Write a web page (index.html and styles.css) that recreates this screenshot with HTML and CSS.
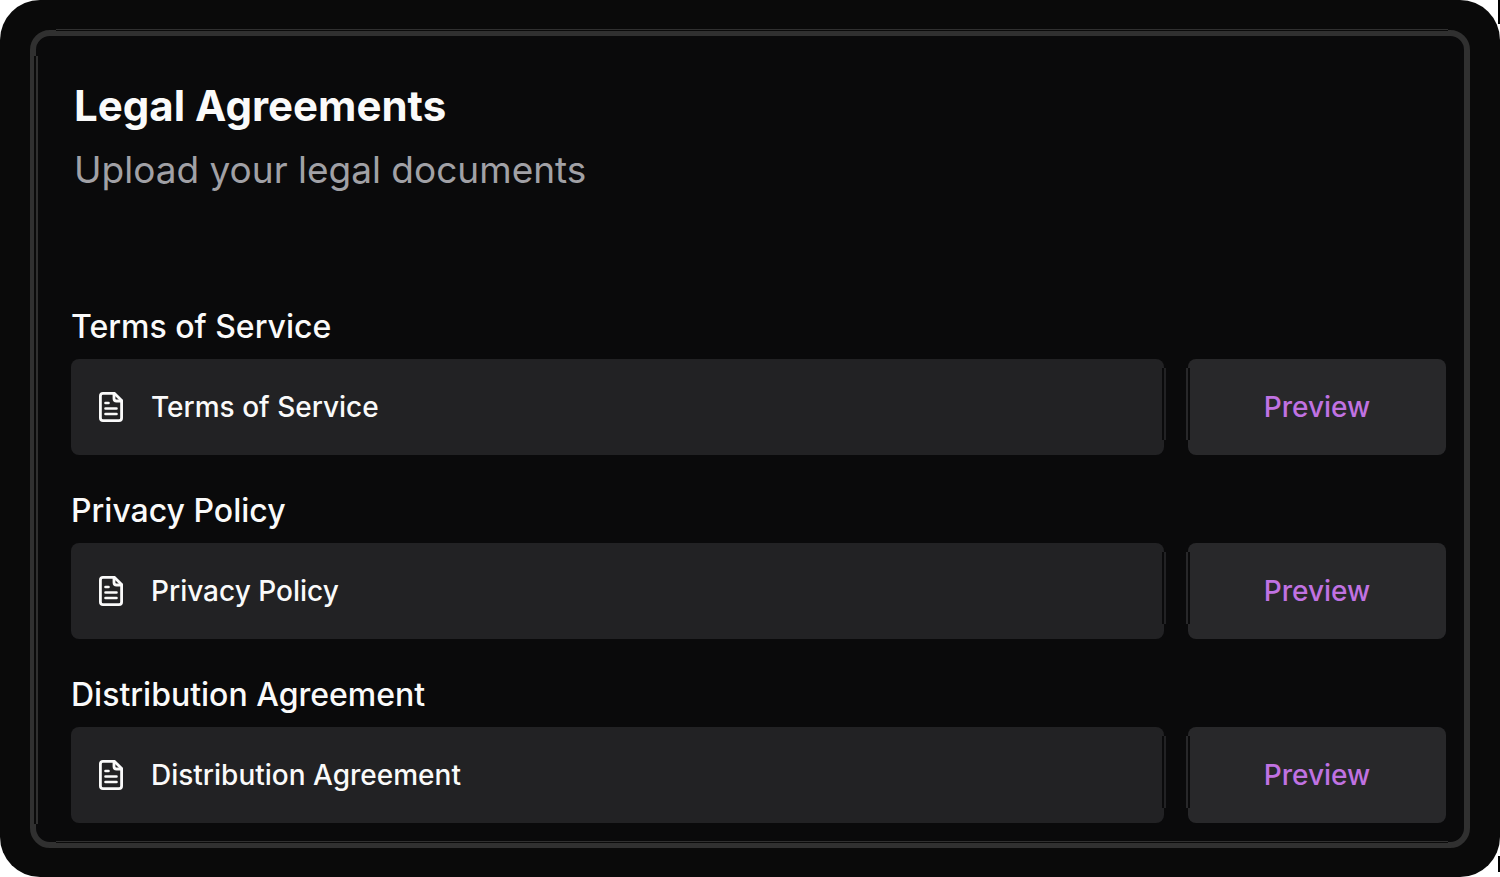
FILE: index.html
```html
<!DOCTYPE html>
<html lang="en">
<head>
<meta charset="utf-8">
<meta name="viewport" content="width=device-width, initial-scale=1">
<title>Legal Agreements</title>
<link rel="stylesheet" href="styles.css">
</head>
<body>
<svg class="symbols" aria-hidden="true">
  <symbol id="file-text" viewBox="0 0 24 30">
    <path d="M4 1.4H15.500L22.600 8.500V26Q22.600 28.600 20 28.600H4Q1.400 28.600 1.400 26V4Q1.400 1.400 4 1.400Z"/>
    <path d="M15 1.500V6.500Q15 9 17.500 9H22.500"/>
    <path class="file-lines" d="M6.500 11H9.500M6.500 16.500H17.500M6.500 22H17.500"/>
  </symbol>
</svg>
<main class="panel">
  <section class="frame">
    <header class="intro">
      <h1 class="title">Legal Agreements</h1>
      <p class="subtitle">Upload your legal documents</p>
    </header>
    <form class="documents">
      <div class="document">
        <label class="document-label" for="terms">Terms of Service</label>
        <div class="document-row">
          <div class="field">
            <svg class="field-icon" aria-hidden="true"><use href="#file-text"/></svg>
            <input class="field-input" id="terms" type="text" value="Terms of Service" readonly>
          </div>
          <button class="preview" type="button">Preview</button>
        </div>
      </div>
      <div class="document">
        <label class="document-label" for="privacy">Privacy Policy</label>
        <div class="document-row">
          <div class="field">
            <svg class="field-icon" aria-hidden="true"><use href="#file-text"/></svg>
            <input class="field-input" id="privacy" type="text" value="Privacy Policy" readonly>
          </div>
          <button class="preview" type="button">Preview</button>
        </div>
      </div>
      <div class="document">
        <label class="document-label" for="distribution">Distribution Agreement</label>
        <div class="document-row">
          <div class="field">
            <svg class="field-icon" aria-hidden="true"><use href="#file-text"/></svg>
            <input class="field-input" id="distribution" type="text" value="Distribution Agreement" readonly>
          </div>
          <button class="preview" type="button">Preview</button>
        </div>
      </div>
    </form>
  </section>
</main>
</body>
</html>
```
FILE: styles.css
```css
*,
*::before,
*::after {
  box-sizing: border-box;
}

body {
  margin: 0;
  background: #fff;
  color: #fafafa;
  font-family: Inter, "Liberation Sans", sans-serif;
}

.symbols {
  position: absolute;
  width: 0;
  height: 0;
}

.panel {
  position: relative;
  display: flex;
  min-height: 100vh;
  padding: 30px 30px 29px;
  border-radius: 40px;
  background: #0a0a0a;
}

/* dark slivers beside the right-hand corners */
.panel::before,
.panel::after {
  content: "";
  position: absolute;
  right: 0;
  width: 2px;
  background: #000;
}

.panel::before {
  top: 0;
  height: 24px;
}

.panel::after {
  bottom: 5px;
  height: 16px;
}

.frame {
  position: relative;
  flex: 1;
  padding: 38px 18px 19px 35px;
  border: 6px solid #303030;
  border-radius: 20px;
  background: #0a0a0b;
}

/* hairlines along the frame's edges */
.frame::before {
  content: "";
  position: absolute;
  top: 20px;
  bottom: 18px;
  left: -2px;
  width: 4px;
  border-right: 2px solid #303030;
  background: #0a0a0a;
}

.frame::after {
  content: "";
  position: absolute;
  top: -7px;
  right: 16px;
  bottom: -1px;
  left: 20px;
  border-top: 1px solid #303030;
  background:
    linear-gradient(#0a0a0a, #0a0a0a) top / 100% 1px no-repeat,
    linear-gradient(#0a0a0a, #0a0a0a) bottom / 100% 1px no-repeat,
    linear-gradient(#303030, #303030) bottom / 100% 2px no-repeat;
  pointer-events: none;
}

.intro {
  padding-left: 3px;
}

.title,
.subtitle {
  margin: 0;
  line-height: 64px;
}

.title {
  font-size: 42px;
  font-weight: 700;
}

.subtitle {
  color: #a1a1a6;
  font-size: 37px;
}

.documents {
  display: flex;
  flex-direction: column;
  gap: 32px;
  margin-top: 101px;
}

.document {
  display: flex;
  flex-direction: column;
  gap: 8px;
}

.document-label {
  font-size: 32px;
  font-weight: 500;
  line-height: 48px;
}

.document-row {
  display: grid;
  grid-template-columns: minmax(0, 1fr) 258px;
  gap: 24px;
}

.field,
.preview {
  position: relative;
  height: 96px;
  border-radius: 8px;
}

.field {
  display: flex;
  align-items: center;
  gap: 28px;
  padding: 0 28px;
  background: #222224;
}

.field-icon {
  flex: none;
  width: 24px;
  height: 30px;
  fill: none;
  stroke: #fafafa;
  stroke-width: 2.8;
  stroke-linecap: round;
  stroke-linejoin: round;
}

.file-lines {
  stroke-width: 2.6;
}

.field-input {
  flex: 1;
  min-width: 0;
  padding: 0;
  border: 0;
  outline: 0;
  background: transparent;
  color: inherit;
  font: 500 28px/40px Inter, "Liberation Sans", sans-serif;
}

.preview {
  padding: 0;
  border: 0;
  background: #28282a;
  color: #c072e2;
  font: 500 28px/40px Inter, "Liberation Sans", sans-serif;
  cursor: pointer;
}

/* split edges between each field and its button */
.field::after,
.preview::before {
  content: "";
  position: absolute;
  top: 9px;
  bottom: 15px;
  width: 4px;
  background: #0a0a0b;
}

.field::after {
  right: -2px;
  border-right: 2px solid #222224;
}

.preview::before {
  left: -2px;
  border-left: 2px solid #28282a;
}
```
